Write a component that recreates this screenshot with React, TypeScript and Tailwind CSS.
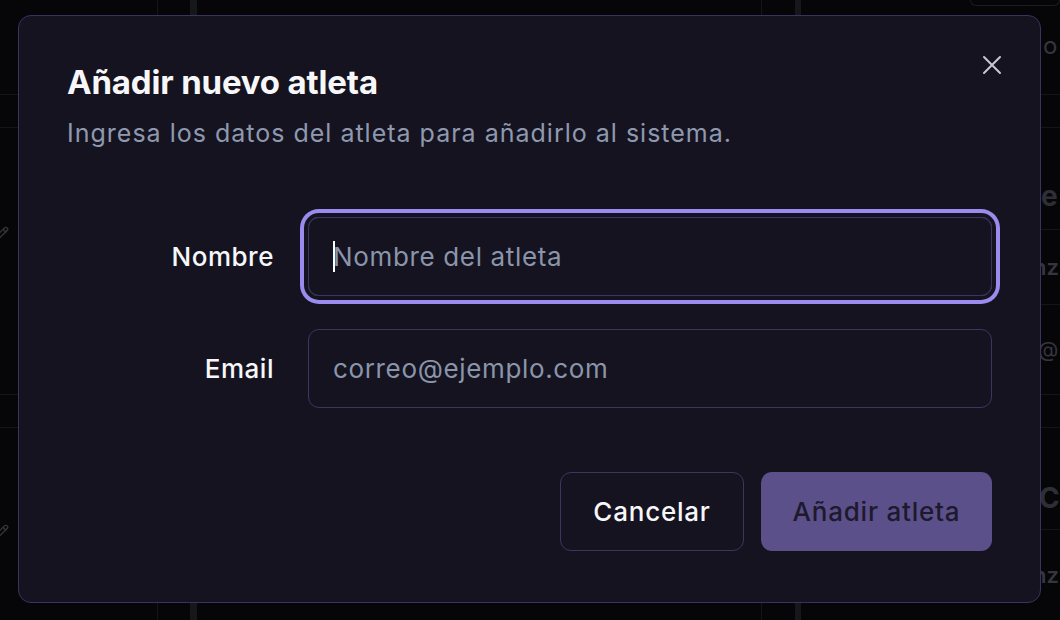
import { Pencil } from "lucide-react";

function BackdropPage() {
  return (
    <div className="flex h-full w-full text-[#35363c]">
      <div className="flex w-[158px] shrink-0 flex-col border-r border-[#14151a]">
        <div className="h-[95px] border-b border-[#14151a]" />
        <div className="h-[33px] border-b border-[#14151a]" />
        <div className="flex h-[267px] items-start border-b border-[#14151a] pt-[98px]">
          <Pencil size={16} className="-ml-[7px]" />
        </div>
        <div className="h-[33px] border-b border-[#14151a]" />
        <div className="flex flex-1 items-start pt-[96px]">
          <Pencil size={16} className="-ml-[7px]" />
        </div>
      </div>
      <div className="w-[32px] shrink-0" />
      <div className="w-[7px] shrink-0 bg-[#15171a]" />
      <div className="w-[565px] shrink-0 border-r border-[#14151a]" />
      <div className="w-[33px] shrink-0" />
      <div className="w-[6px] shrink-0 bg-[#15171a]" />
      <div className="flex min-w-0 flex-1 flex-col overflow-hidden">
        <div className="flex h-[95px] flex-col border-b border-[#14151a]">
          <div className="ml-[169px] h-[6px] rounded-b-[14px] border border-t-0 border-[#1c1d22]" />
          <div className="mt-[22px] ml-[242px] text-[24px]">o</div>
        </div>
        <div className="h-[33px] border-b border-[#14151a]" />
        <div className="flex h-[102px] items-end border-b border-[#14151a] pb-[12px]">
          <span className="ml-[240px] text-[28px] font-bold text-[#2e2f34]">e</span>
        </div>
        <div className="flex h-[75px] items-center border-b border-[#14151a]">
          <span className="ml-[232px] text-[22px] font-semibold">nz</span>
        </div>
        <div className="flex h-[90px] items-center border-b border-[#14151a]">
          <span className="ml-[237px] text-[21px]">@</span>
        </div>
        <div className="h-[33px] border-b border-[#14151a]" />
        <div className="flex h-[102px] items-end border-b border-[#14151a] pb-[10px]">
          <span className="ml-[238px] text-[28px] font-bold text-[#2e2f34]">C</span>
        </div>
        <div className="flex flex-1 items-center">
          <span className="ml-[232px] text-[22px] font-semibold">nz</span>
        </div>
      </div>
    </div>
  );
}

export default function App() {
  return (
    <div className="relative h-[620px] w-[1060px] overflow-hidden bg-[#060609] font-['Inter',sans-serif]">
      <BackdropPage />

      <div className="absolute left-[18px] top-[15px] flex h-[588px] w-[1023px] flex-col rounded-[13px] border border-[#3b3262] bg-[#15131f] p-12">
        <button className="absolute right-[38px] top-[39px] text-[#c9c8d2]" aria-label="Cerrar">
          <svg width="20" height="20" viewBox="0 0 20 20" fill="none" stroke="currentColor" strokeWidth="2" strokeLinecap="round">
            <path d="M2 2 18 18M18 2 2 18" />
          </svg>
        </button>

        <h2 className="text-[33px] font-bold leading-[36px] tracking-[-0.005em] text-[#f7f7fa]">
          Añadir nuevo atleta
        </h2>
        <p className="mt-[17px] text-[25px] leading-[32px] tracking-[0.04em] text-[#8e99b0]">
          Ingresa los datos del atleta para añadirlo al sistema.
        </p>

        <div className="mt-[68px] grid grid-cols-[207px_1fr] items-center gap-x-[34px] gap-y-[33px]">
          <label className="text-right text-[26px] font-medium tracking-[0.02em] text-[#f7f7fa]">Nombre</label>
          <div className="relative">
            <input
              className="h-[79px] w-full rounded-[11px] border border-[#3d3463] bg-transparent pl-[24px] text-[26px] tracking-[0.025em] text-white placeholder:text-[#8a95ab] outline-none ring-4 ring-[#9a8cee] ring-offset-4 ring-offset-[#15131f]"
              placeholder="Nombre del atleta"
            />
            <span className="absolute left-[25px] top-[24px] h-[31px] w-[2px] bg-white" />
          </div>

          <label className="text-right text-[26px] font-medium tracking-[0.02em] text-[#f7f7fa]">Email</label>
          <input
            type="email"
            className="h-[79px] w-full rounded-[11px] border border-[#3d3463] bg-transparent pl-[24px] text-[26px] tracking-[0.025em] text-white placeholder:text-[#8a95ab] outline-none"
            placeholder="correo@ejemplo.com"
          />
        </div>

        <div className="mt-[64px] flex justify-end gap-[17px]">
          <button className="h-[79px] w-[184px] rounded-[11px] border border-[#3d3463] text-[26px] font-medium tracking-[0.03em] text-[#f7f7fa]">
            Cancelar
          </button>
          <button className="h-[79px] w-[231px] rounded-[11px] bg-[#5b508a] text-[26px] font-medium tracking-[0.03em] text-[#1d1a2e]">
            Añadir atleta
          </button>
        </div>
      </div>
    </div>
  );
}
